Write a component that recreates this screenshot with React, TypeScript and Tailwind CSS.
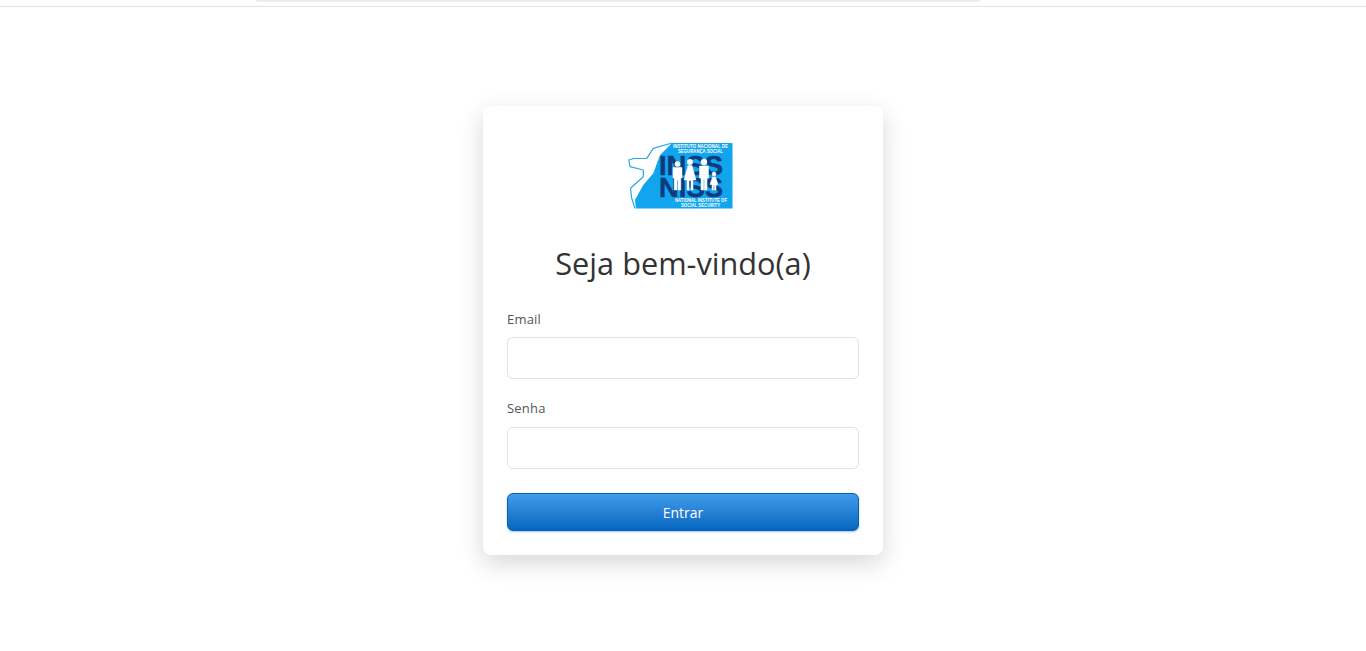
const logoFont = "'Liberation Sans', sans-serif";

const Logo = () => (
  <svg width="105" height="68" viewBox="0 0 105 68" className="block">
    <path d="M44 2 L104.500 2 L104.500 67.500 L8 67.500 L7 59 L15.300 44 L25.300 32.300 L32 14 Z" fill="#10a5ec" />
    <path
      d="M44 2 L25.300 7.300 L18.700 17.300 L6 17.500 L0.800 19 L2 25.700 L15.300 29 L15.300 35.700 L2.500 47.300 L3.700 57.300 L7 67.500"
      fill="none"
      stroke="#2aa8e6"
      strokeWidth="1.200"
      strokeLinejoin="round"
    />
    <text x="45" y="6.500" fontSize="5.500" fontWeight="700" fill="#fff" textLength="55" lengthAdjust="spacingAndGlyphs" fontFamily={logoFont}>INSTITUTO NACIONAL DE</text>
    <text x="50" y="11.500" fontSize="5.500" fontWeight="700" fill="#fff" textLength="45" lengthAdjust="spacingAndGlyphs" fontFamily={logoFont}>SEGURANÇA SOCIAL</text>
    <text x="31" y="34" fontSize="28" fontWeight="700" fill="#0e3a80" stroke="#0e3a80" strokeWidth="0.500" textLength="64" lengthAdjust="spacingAndGlyphs" fontFamily={logoFont}>INSS</text>
    <text x="31" y="55.500" fontSize="28" fontWeight="700" fill="#0e3a80" stroke="#0e3a80" strokeWidth="0.500" textLength="64" lengthAdjust="spacingAndGlyphs" fontFamily={logoFont}>NISS</text>
    <g fill="#fff" stroke="#fff" strokeWidth="0.500" strokeLinejoin="round">
      <circle cx="49.500" cy="23" r="2.600" />
      <path d="M45 26.500 H54 V37 H52.800 V49 H50 V39 H49 V49 H46.200 V37 H45 Z" />
      <circle cx="62" cy="21" r="2.800" />
      <path d="M60 24.500 H64 L68 39 H65 V49 H63 V39.500 H61 V49 H59 V39 H56 Z" />
      <circle cx="76" cy="21" r="3" />
      <path d="M71.500 25 H80.500 V37 H79 V49 H76.500 V38 H75.500 V49 H73 V37 H71.500 Z" />
      <circle cx="86" cy="33" r="2" />
      <path d="M84.500 36 H87.500 L90 43.500 H88 V49 H86.500 V44 H85.500 V49 H84 V43.500 H82 Z" />
    </g>
    <text x="47" y="60.500" fontSize="5.500" fontWeight="700" fill="#fff" textLength="52" lengthAdjust="spacingAndGlyphs" fontFamily={logoFont}>NATIONAL INSTITUTE OF</text>
    <text x="53" y="65.500" fontSize="5.500" fontWeight="700" fill="#fff" textLength="39" lengthAdjust="spacingAndGlyphs" fontFamily={logoFont}>SOCIAL SECURITY</text>
  </svg>
);

const labelClass = "block text-[13px] leading-[20px] tracking-[0.2px] text-[#555555]";
const inputClass = "block h-[42px] w-full rounded-md border border-[#e2e2e2] bg-white px-3 text-sm";

export default function App() {
  return (
    <div className="min-h-[651px] bg-white font-['Open_Sans',sans-serif]">
      <div className="h-[7px] border-b border-[#e3e3e3]">
        <div className="ml-[256px] h-[2px] w-[724px] rounded-b-md bg-[#ebebf0]" />
      </div>
      <div className="flex justify-center pt-[99px]">
        <div className="w-[400px] rounded-lg bg-white p-6 shadow-[0_8px_24px_rgba(0,0,0,0.16)]">
          <div className="mt-[11px] flex justify-center pr-[5px]">
            <Logo />
          </div>
          <h1 className="mt-[32px] text-center text-[30.7px] leading-[44px] font-normal text-[#333333]">
            Seja bem-vindo(a)
          </h1>
          <form className="mt-[24px]">
            <label className={labelClass}>Email</label>
            <input type="email" className={`mt-2 ${inputClass}`} />
            <label className={`mt-[19px] ${labelClass}`}>Senha</label>
            <input type="password" className={`mt-[9px] ${inputClass}`} />
            <button
              type="button"
              className="mt-6 block h-[38px] w-full rounded-md border border-[#0a5fb0] bg-gradient-to-b from-[#3f9cea] to-[#0366c0] pt-[1px] text-sm text-white shadow-[0_1px_2px_rgba(20,110,210,0.4)]"
            >
              Entrar
            </button>
          </form>
        </div>
      </div>
    </div>
  );
}
